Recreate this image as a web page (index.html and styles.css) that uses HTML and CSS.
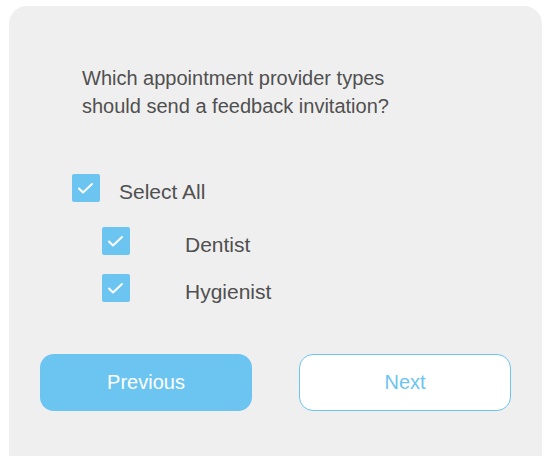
FILE: index.html
```html
<!DOCTYPE html>
<html lang="en">
<head>
    <meta charset="UTF-8">
    <title>Feedback invitation</title>
    <link rel="stylesheet" href="styles.css">
</head>
<body>
    <main class="card">
        <p class="question">Which appointment provider types<br>should send a feedback invitation?</p>

        <ul class="options">
            <li class="option">
                <span class="box"><svg viewBox="0 0 28 28"><polyline points="7,14.5 11,18.5 20,10"/></svg></span>
                <span class="label">Select All</span>
            </li>
            <li class="option sub">
                <span class="box"><svg viewBox="0 0 28 28"><polyline points="7,14.5 11,18.5 20,10"/></svg></span>
                <span class="label">Dentist</span>
            </li>
            <li class="option sub">
                <span class="box"><svg viewBox="0 0 28 28"><polyline points="7,14.5 11,18.5 20,10"/></svg></span>
                <span class="label">Hygienist</span>
            </li>
        </ul>

        <div class="actions">
            <button class="btn btn-prev">Previous</button>
            <button class="btn btn-next">Next</button>
        </div>
    </main>
</body>
</html>
```

FILE: styles.css
```css
body {
    margin: 0;
    background: #fff;
    font-family: 'Liberation Sans', Arial, sans-serif;
    color: #505050;
}

.card {
    margin: 6px 0 0 9px;
    width: 533px;
    height: 470px;
    box-sizing: border-box;
    padding: 58px 31px 0 31px;
    background: #efefef;
    border-radius: 18px;
}

.question {
    margin: 0 0 0 42px;
    font-size: 20px;
    line-height: 28px;
}

.options {
    list-style: none;
    margin: 54px 0 0 0;
    padding: 0;
}

.option {
    display: flex;
    align-items: center;
    height: 28px;
    margin-left: 32px;
    font-size: 21px;
}

.option .label {
    margin-left: 19px;
    padding-top: 7px;
}

.option.sub {
    margin-left: 62px;
    margin-top: 19px;
}

.option.sub:nth-child(2) {
    margin-top: 25px;
}

.option.sub .label {
    margin-left: 55px;
}

.box {
    width: 28px;
    height: 28px;
    border-radius: 2px;
    background: #6cc4f0;
    flex-shrink: 0;
}

.box svg {
    display: block;
    width: 28px;
    height: 28px;
    fill: none;
    stroke: #fff;
    stroke-width: 2;
    stroke-linecap: round;
    stroke-linejoin: round;
}

.actions {
    display: flex;
    gap: 47px;
    margin-top: 52px;
}

.btn {
    width: 212px;
    height: 57px;
    border-radius: 14px;
    font-family: inherit;
    font-size: 20px;
    cursor: pointer;
}

.btn-prev {
    background: #6cc4f0;
    border: none;
    color: #fff;
}

.btn-next {
    background: #fff;
    border: 1.5px solid #6cc4f0;
    color: #6cc4f0;
}
```
